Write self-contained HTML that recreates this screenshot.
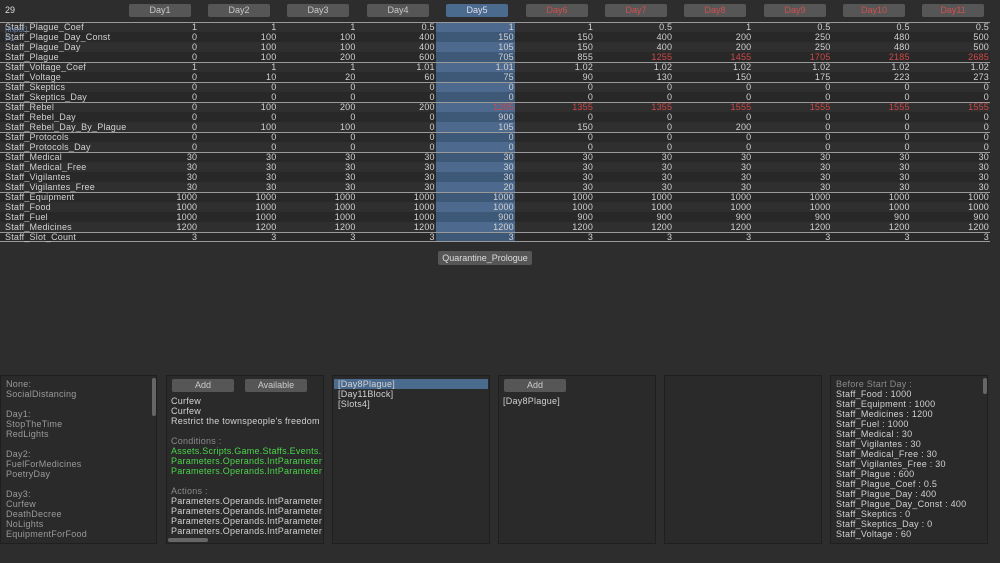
<!DOCTYPE html>
<html><head><meta charset="utf-8"><style>
*{margin:0;padding:0;box-sizing:border-box}
body{width:1000px;height:563px;background:#2d2d2d;font-family:"Liberation Sans","DejaVu Sans",sans-serif;font-size:9px;color:#d2d2d2;position:relative;overflow:hidden}
.ab{position:absolute}
.btn{position:absolute;top:4px;width:62px;height:13px;background:#565656;border-radius:2px;text-align:center;line-height:13px;color:#c8c8c8;font-size:9px}
.btn.r{color:#d05050}
.btn.s{background:#4a6a8e;color:#dde}
table{position:absolute;left:0;top:22px;border-collapse:collapse;table-layout:fixed;width:990px}
td{height:10px;line-height:10px;padding:0 1px 0 0;text-align:right;white-space:nowrap;overflow:hidden;font-size:9px;letter-spacing:0.2px}
td:first-child{text-align:left;padding-left:5px;width:117px;overflow:visible;position:relative;z-index:1}
tr:nth-child(odd) td{background:#2f2f2f}
tr:nth-child(even) td{background:#282828}
tr:nth-child(odd) td:nth-child(6){background:#4d6a8e}
tr:nth-child(even) td:nth-child(6){background:#3e5878}
tr.g td{box-shadow:inset 0 1px 0 #9a9a9a}
tr.last td{box-shadow:inset 0 1px 0 #9a9a9a,inset 0 -1px 0 #9a9a9a}
.r{color:#d04848}
.p{position:absolute;top:375px;height:169px;background:#2a2a2a;border:1px solid #1f1f1f;overflow:hidden;letter-spacing:0.25px}
.p div.l{line-height:10px;white-space:nowrap}
.b2{position:absolute;height:13px;background:#565656;border-radius:2px;text-align:center;line-height:13px;color:#ccc;letter-spacing:0}
</style></head><body>
<div class="ab" style="left:5px;top:5px;color:#ddd">29</div>
<div class="btn" style="left:129px">Day1</div>
<div class="btn" style="left:208px">Day2</div>
<div class="btn" style="left:287px">Day3</div>
<div class="btn" style="left:367px">Day4</div>
<div class="btn s" style="left:446px">Day5</div>
<div class="btn r" style="left:526px">Day6</div>
<div class="btn r" style="left:605px">Day7</div>
<div class="btn r" style="left:684px">Day8</div>
<div class="btn r" style="left:764px">Day9</div>
<div class="btn r" style="left:843px">Day10</div>
<div class="btn r" style="left:922px">Day11</div>
<table>
<colgroup><col style="width:119px"><col span="10" style="width:79.1px"><col style="width:79.1px"></colgroup>
<tr class="g"><td>Staff_Plague_Coef</td><td>1</td><td>1</td><td>1</td><td>0.5</td><td>1</td><td>1</td><td>0.5</td><td>1</td><td>0.5</td><td>0.5</td><td>0.5</td></tr>
<tr><td>Staff_Plague_Day_Const</td><td>0</td><td>100</td><td>100</td><td>400</td><td>150</td><td>150</td><td>400</td><td>200</td><td>250</td><td>480</td><td>500</td></tr>
<tr><td>Staff_Plague_Day</td><td>0</td><td>100</td><td>100</td><td>400</td><td>105</td><td>150</td><td>400</td><td>200</td><td>250</td><td>480</td><td>500</td></tr>
<tr><td>Staff_Plague</td><td>0</td><td>100</td><td>200</td><td>600</td><td>705</td><td>855</td><td class="r">1255</td><td class="r">1455</td><td class="r">1705</td><td class="r">2185</td><td class="r">2685</td></tr>
<tr class="g"><td>Staff_Voltage_Coef</td><td>1</td><td>1</td><td>1</td><td>1.01</td><td>1.01</td><td>1.02</td><td>1.02</td><td>1.02</td><td>1.02</td><td>1.02</td><td>1.02</td></tr>
<tr><td>Staff_Voltage</td><td>0</td><td>10</td><td>20</td><td>60</td><td>75</td><td>90</td><td>130</td><td>150</td><td>175</td><td>223</td><td>273</td></tr>
<tr class="g"><td>Staff_Skeptics</td><td>0</td><td>0</td><td>0</td><td>0</td><td>0</td><td>0</td><td>0</td><td>0</td><td>0</td><td>0</td><td>0</td></tr>
<tr><td>Staff_Skeptics_Day</td><td>0</td><td>0</td><td>0</td><td>0</td><td>0</td><td>0</td><td>0</td><td>0</td><td>0</td><td>0</td><td>0</td></tr>
<tr class="g"><td>Staff_Rebel</td><td>0</td><td>100</td><td>200</td><td>200</td><td class="r">1205</td><td class="r">1355</td><td class="r">1355</td><td class="r">1555</td><td class="r">1555</td><td class="r">1555</td><td class="r">1555</td></tr>
<tr><td>Staff_Rebel_Day</td><td>0</td><td>0</td><td>0</td><td>0</td><td>900</td><td>0</td><td>0</td><td>0</td><td>0</td><td>0</td><td>0</td></tr>
<tr><td>Staff_Rebel_Day_By_Plague</td><td>0</td><td>100</td><td>100</td><td>0</td><td>105</td><td>150</td><td>0</td><td>200</td><td>0</td><td>0</td><td>0</td></tr>
<tr class="g"><td>Staff_Protocols</td><td>0</td><td>0</td><td>0</td><td>0</td><td>0</td><td>0</td><td>0</td><td>0</td><td>0</td><td>0</td><td>0</td></tr>
<tr><td>Staff_Protocols_Day</td><td>0</td><td>0</td><td>0</td><td>0</td><td>0</td><td>0</td><td>0</td><td>0</td><td>0</td><td>0</td><td>0</td></tr>
<tr class="g"><td>Staff_Medical</td><td>30</td><td>30</td><td>30</td><td>30</td><td>30</td><td>30</td><td>30</td><td>30</td><td>30</td><td>30</td><td>30</td></tr>
<tr><td>Staff_Medical_Free</td><td>30</td><td>30</td><td>30</td><td>30</td><td>30</td><td>30</td><td>30</td><td>30</td><td>30</td><td>30</td><td>30</td></tr>
<tr><td>Staff_Vigilantes</td><td>30</td><td>30</td><td>30</td><td>30</td><td>30</td><td>30</td><td>30</td><td>30</td><td>30</td><td>30</td><td>30</td></tr>
<tr><td>Staff_Vigilantes_Free</td><td>30</td><td>30</td><td>30</td><td>30</td><td>20</td><td>30</td><td>30</td><td>30</td><td>30</td><td>30</td><td>30</td></tr>
<tr class="g"><td>Staff_Equipment</td><td>1000</td><td>1000</td><td>1000</td><td>1000</td><td>1000</td><td>1000</td><td>1000</td><td>1000</td><td>1000</td><td>1000</td><td>1000</td></tr>
<tr><td>Staff_Food</td><td>1000</td><td>1000</td><td>1000</td><td>1000</td><td>1000</td><td>1000</td><td>1000</td><td>1000</td><td>1000</td><td>1000</td><td>1000</td></tr>
<tr><td>Staff_Fuel</td><td>1000</td><td>1000</td><td>1000</td><td>1000</td><td>900</td><td>900</td><td>900</td><td>900</td><td>900</td><td>900</td><td>900</td></tr>
<tr><td>Staff_Medicines</td><td>1200</td><td>1200</td><td>1200</td><td>1200</td><td>1200</td><td>1200</td><td>1200</td><td>1200</td><td>1200</td><td>1200</td><td>1200</td></tr>
<tr class="last"><td>Staff_Slot_Count</td><td>3</td><td>3</td><td>3</td><td>3</td><td>3</td><td>3</td><td>3</td><td>3</td><td>3</td><td>3</td><td>3</td></tr>
</table>
<div class="ab" style="left:5px;top:25px;color:#6f8fc0;font-size:8px;line-height:9px;opacity:.8;z-index:2">[Input]<br>F1</div>
<div class="b2" style="left:438px;top:251px;width:94px;height:14px;line-height:14px;color:#ddd">Quarantine_Prologue</div>

<div class="p" style="left:0;width:157px;padding:3px 5px;color:#9a9a9a">
<div class="l">None:</div><div class="l">SocialDistancing</div><div class="l">&nbsp;</div>
<div class="l">Day1:</div><div class="l">StopTheTime</div><div class="l">RedLights</div><div class="l">&nbsp;</div>
<div class="l">Day2:</div><div class="l">FuelForMedicines</div><div class="l">PoetryDay</div><div class="l">&nbsp;</div>
<div class="l">Day3:</div><div class="l">Curfew</div><div class="l">DeathDecree</div><div class="l">NoLights</div><div class="l">EquipmentForFood</div>
<div class="ab" style="left:151px;top:2px;width:4px;height:38px;background:#666;border-radius:2px"></div>
</div>

<div class="p" style="left:166px;width:158px;padding:20px 4px 0 4px">
<div class="b2" style="left:5px;top:3px;width:62px">Add</div>
<div class="b2" style="left:78px;top:3px;width:62px">Available</div>
<div class="l">Curfew</div><div class="l">Curfew</div><div class="l">Restrict the townspeople's freedom</div><div class="l">&nbsp;</div>
<div class="l" style="color:#8a8a8a">Conditions :</div>
<div class="l" style="color:#4cd44c">Assets.Scripts.Game.Staffs.Events.</div>
<div class="l" style="color:#4cd44c">Parameters.Operands.IntParameter</div>
<div class="l" style="color:#4cd44c">Parameters.Operands.IntParameter</div><div class="l">&nbsp;</div>
<div class="l" style="color:#8a8a8a">Actions :</div>
<div class="l">Parameters.Operands.IntParameter</div><div class="l">Parameters.Operands.IntParameter</div><div class="l">Parameters.Operands.IntParameter</div><div class="l">Parameters.Operands.IntParameter</div>
<div class="ab" style="left:1px;top:162px;width:40px;height:4px;background:#666;border-radius:2px"></div>
</div>

<div class="p" style="left:332px;width:158px;padding:3px 1px">
<div class="l" style="background:#4a6a8e;padding-left:4px">[Day8Plague]</div>
<div class="l" style="padding-left:4px">[Day11Block]</div>
<div class="l" style="padding-left:4px">[Slots4]</div>
</div>

<div class="p" style="left:498px;width:158px;padding:20px 4px 0 4px">
<div class="b2" style="left:5px;top:3px;width:62px">Add</div>
<div class="l">[Day8Plague]</div>
</div>

<div class="p" style="left:664px;width:158px"></div>

<div class="p" style="left:830px;width:158px;padding:3px 5px">
<div class="l" style="color:#8a8a8a">Before Start Day :</div>
<div class="l">Staff_Food : 1000</div><div class="l">Staff_Equipment : 1000</div><div class="l">Staff_Medicines : 1200</div><div class="l">Staff_Fuel : 1000</div><div class="l">Staff_Medical : 30</div><div class="l">Staff_Vigilantes : 30</div><div class="l">Staff_Medical_Free : 30</div><div class="l">Staff_Vigilantes_Free : 30</div><div class="l">Staff_Plague : 600</div><div class="l">Staff_Plague_Coef : 0.5</div><div class="l">Staff_Plague_Day : 400</div><div class="l">Staff_Plague_Day_Const : 400</div><div class="l">Staff_Skeptics : 0</div><div class="l">Staff_Skeptics_Day : 0</div><div class="l">Staff_Voltage : 60</div>
<div class="ab" style="left:152px;top:2px;width:4px;height:16px;background:#666;border-radius:2px"></div>
</div>
</body></html>
